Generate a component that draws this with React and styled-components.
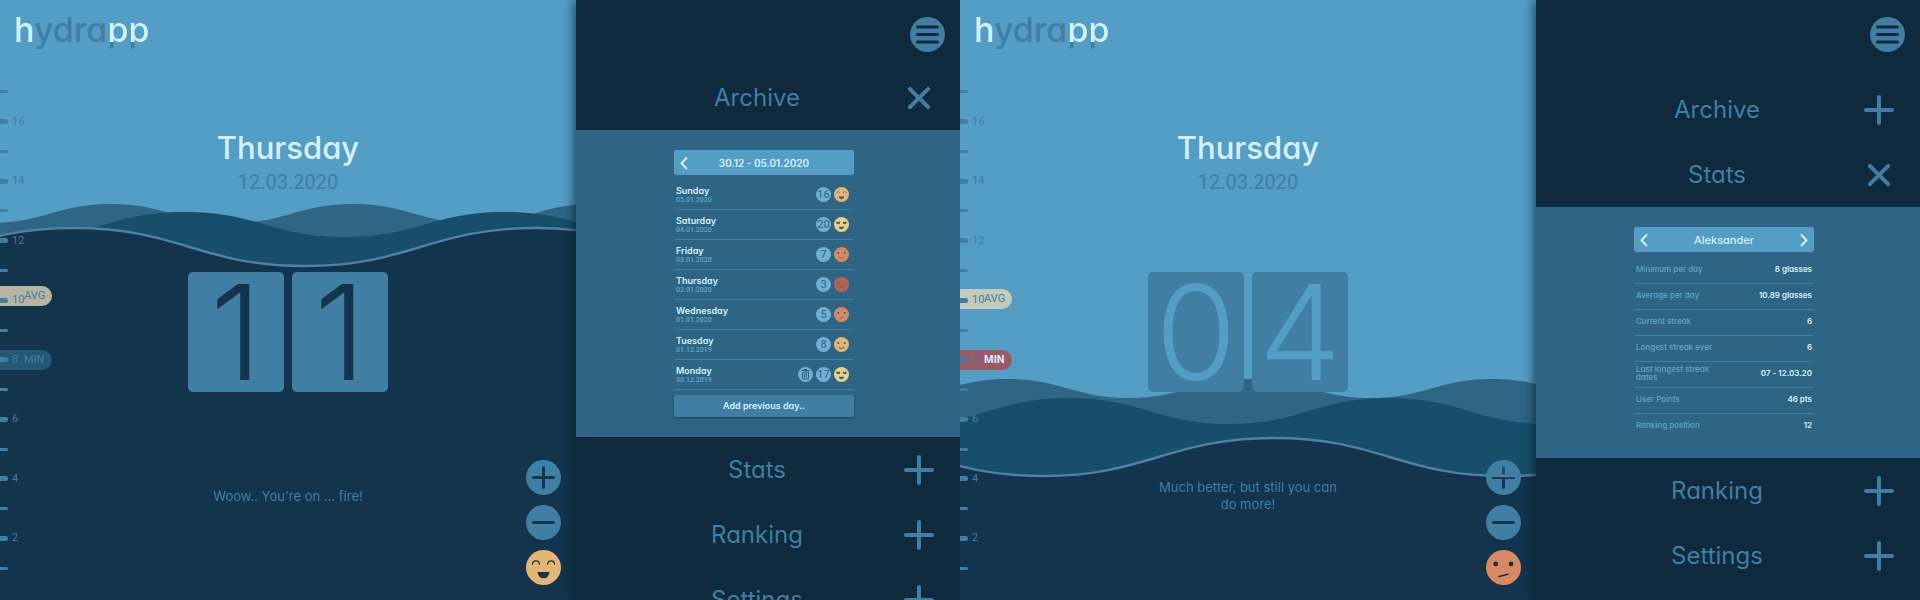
import React, { useId } from "react";
import styled, { createGlobalStyle, css } from "styled-components";

const color = {
  sky: "#549dc5",
  mid: "#407ea3",
  panel: "#2e6585",
  waveBack: "#2f6585",
  waveMiddle: "#174e6b",
  deep: "#12344d",
  night: "#0f2a3d",
  crest: "#4e81a4",
  pale: "#d4f1fd",
  chip: "#70b0d4",
  muted: "#5fa6cb",
  sand: "#e4b573",
  yellow: "#efce7e",
  orange: "#d98961",
  red: "#bc6252",
};

const textFont = `Inter, "Open Sans", sans-serif`;
const numberFont = `Roboto, Inter, sans-serif`;

const GlobalStyle = createGlobalStyle`
  *, *::before, *::after { box-sizing: border-box; }
  body {
    margin: 0;
    font-family: ${textFont};
    font-feature-settings: "cv11";
    background: ${color.night};
  }
  button { font: inherit; font-feature-settings: inherit; }
  h1, h2, p, ul { margin: 0; padding: 0; }
`;

const Page = styled.div`
  display: grid;
  grid-template-columns: 1fr 1fr;
`;

const Device = styled.section`
  display: grid;
  grid-template-columns: 3fr 2fr;
  height: 100vh;
  overflow: hidden;
`;

/* ---------- main screen ---------- */

const Screen = styled.main`
  position: relative;
  isolation: isolate;
  display: grid;
  grid-template-columns: 60px 1fr 60px;
  grid-template-rows: 77px 1fr;
  background: ${color.sky};
`;

const WaveLayer = styled.svg`
  position: absolute;
  inset: 0;
  z-index: -1;
  width: 100%;
  height: 100%;
`;

const Header = styled.header`
  grid-column: 1 / -1;
  padding: 10px 14px;
`;

const Logo = styled.h1`
  font-size: 34px;
  line-height: 40px;
  font-weight: 500;
  color: ${color.mid};
`;

const LogoLight = styled.span`
  color: ${color.pale};
`;

const LogoSplit = styled.span`
  color: transparent;
  background: linear-gradient(${color.pale} 80%, ${color.mid} 80%);
  background-clip: text;
  -webkit-background-clip: text;
`;

const Scale = styled.div`
  position: relative;
  display: flex;
  flex-direction: column;
  margin-bottom: 17px;
`;

const Tick = styled.div`
  position: relative;
  z-index: 1;
  flex: 1;
  display: flex;
  align-items: center;
  gap: 4px;
  font-family: ${numberFont};
  font-size: 11px;
  line-height: 12px;
  color: ${color.mid};

  &::before {
    content: "";
    width: 8px;
    height: ${(p) => (p.$major ? 5 : 3)}px;
    border-radius: 0 3px 3px 0;
    background: ${color.mid};
  }
`;

const markerTone = {
  average: css`
    background: #b9b4a0;
    color: ${color.mid};
  `,
  averageLight: css`
    background: #c5cab9;
    color: ${color.mid};
  `,
  reached: css`
    background: #265776;
    color: ${color.mid};
  `,
  missed: css`
    background: #9d5966;
    color: ${color.pale};
    font-weight: 700;
  `,
};

const Marker = styled.div`
  position: absolute;
  left: 0;
  top: ${(p) => ((17.5 - p.$level) / 17) * 100}%;
  transform: translateY(-50%);
  width: 52px;
  padding-left: 24px;
  border-radius: 0 10px 10px 0;
  font-family: ${numberFont};
  font-size: 11px;
  line-height: 20px;
  ${(p) => markerTone[p.$tone]}
`;

const Today = styled.div`
  display: flex;
  flex-direction: column;
  align-items: center;
  padding-top: 51px;
`;

const DayName = styled.h2`
  font-size: 31px;
  line-height: 40px;
  font-weight: 500;
  color: ${color.pale};
`;

const DayDate = styled.p`
  margin-top: 2px;
  font-family: ${numberFont};
  font-size: 20px;
  line-height: 24px;
  color: ${color.mid};
`;

const Counter = styled.div`
  display: flex;
  gap: 8px;
  margin-top: 78px;
`;

const Digit = styled.span`
  width: 96px;
  border-radius: 5px;
  background: ${color.mid};
  color: ${(p) => (p.$submerged ? color.deep : color.sky)};
  font-size: 132px;
  line-height: 120px;
  font-weight: 300;
  text-align: center;
`;

const Message = styled.p`
  flex: 1;
  display: flex;
  align-items: center;
  max-width: 192px;
  font-size: 13px;
  line-height: 17px;
  text-align: center;
  color: ${color.mid};
`;

const Actions = styled.div`
  display: flex;
  flex-direction: column;
  justify-content: flex-end;
  align-items: flex-end;
  gap: 10px;
  padding: 0 15px 15px 0;
`;

const RoundButton = styled.button`
  display: block;
  width: 35px;
  height: 35px;
  padding: 0;
  border: 0;
  border-radius: 50%;
  background: none;
  cursor: pointer;

  svg {
    display: block;
    width: 100%;
    height: 100%;
  }
`;

/* ---------- side menu ---------- */

const Sidebar = styled.aside`
  position: relative;
  z-index: 1;
  display: flex;
  flex-direction: column;
  min-height: 0;
  background: ${color.night};
  box-shadow: 0 0 12px rgba(8, 24, 38, 0.9);
`;

const MenuBar = styled.div`
  flex: none;
  display: flex;
  justify-content: flex-end;
  height: 65px;
  padding: 17px 15px 0 0;
`;

const Menu = styled.nav`
  flex: 1;
  display: flex;
  flex-direction: column;
  justify-content: safe center;
  min-height: 0;
  overflow: hidden;
`;

const MenuHeading = styled.h2`
  flex: none;
  font-size: 24px;
  font-weight: 400;
`;

const MenuButton = styled.button`
  display: flex;
  align-items: center;
  width: 100%;
  height: 65px;
  padding: 0 26px 0 34px;
  border: 0;
  background: none;
  color: ${color.mid};
  cursor: pointer;

  svg {
    flex: none;
    width: 30px;
    height: 30px;
    transform: rotate(${(p) => (p["aria-expanded"] ? 45 : 0)}deg);
  }
`;

const MenuLabel = styled.span`
  flex: 1;
  text-align: center;
`;

const Panel = styled.div`
  flex: none;
  padding: 20px 8px 20px 0;
  background: ${color.panel};
`;

const Card = styled.div`
  width: 180px;
  margin: 0 auto;
`;

const CardHeader = styled.div`
  display: grid;
  grid-template-columns: 20px 1fr 20px;
  align-items: center;
  height: 25px;
  margin-bottom: 5px;
  border-radius: 2px;
  background: ${color.sky};
  color: ${color.pale};
  font-size: ${(p) => p.$size}px;
  font-weight: ${(p) => (p.$size > 10 ? 500 : 600)};
  text-align: center;
`;

const ArrowButton = styled.button`
  display: flex;
  justify-content: center;
  padding: 0;
  border: 0;
  background: none;
  color: ${color.pale};
  cursor: pointer;
`;

const CardTitle = styled.span`
  grid-column: 2;
`;

const DayList = styled.ul`
  list-style: none;
`;

const DayRow = styled.li`
  display: flex;
  align-items: center;
  gap: 3px;
  height: 30px;
  padding: 0 5px 0 2px;
  border-bottom: 1px solid ${color.mid};
`;

const DayText = styled.div`
  flex: 1;
  font-size: 9px;
  line-height: 10px;
  font-weight: 600;
  color: ${color.pale};
`;

const SmallDate = styled.time`
  display: block;
  font-family: ${numberFont};
  font-size: 7px;
  line-height: 8px;
  font-weight: 500;
  color: ${color.muted};
`;

const Chip = styled.span`
  display: flex;
  align-items: center;
  justify-content: center;
  width: 15px;
  height: 15px;
  border-radius: 50%;
  background: ${color.chip};
  color: ${color.panel};
  font-family: ${numberFont};
  font-size: 11px;
  line-height: 15px;

  svg {
    display: block;
  }
`;

const ChipButton = styled(Chip).attrs({ as: "button", type: "button" })`
  padding: 0;
  border: 0;
  cursor: pointer;
`;

const AddButton = styled.button`
  display: block;
  width: 100%;
  height: 22px;
  margin-top: 5px;
  padding: 0;
  border: 0;
  border-radius: 2px;
  background: ${color.mid};
  box-shadow: 0 1px 2px rgba(10, 40, 60, 0.6);
  color: ${color.pale};
  font-size: 9px;
  line-height: 20px;
  font-weight: 600;
  cursor: pointer;
`;

const StatsTable = styled.table`
  width: 100%;
  border-collapse: collapse;

  tr + tr {
    border-top: 1px solid ${color.mid};
  }
  th,
  td {
    height: 26px;
    padding: 0 2px 2px;
    font-size: 8px;
    line-height: 8px;
  }
  tr:last-child > * {
    height: 25px;
  }
  th {
    width: 82px;
    text-align: left;
    font-weight: 500;
    color: ${color.muted};
  }
  td {
    text-align: right;
    font-weight: 600;
    color: ${color.pale};
  }
`;

/* ---------- drawings ---------- */

function wavePath({ crest, period, high, low }) {
  const half = period / 2;
  const bend = half * 0.45;
  const start = crest - period * 2;
  let x = start;
  let y = high;
  let d = `M${x} ${y}`;
  while (x < 640) {
    const nextY = y === high ? low : high;
    d += ` C${x + bend} ${y} ${x + half - bend} ${nextY} ${x + half} ${nextY}`;
    x += half;
    y = nextY;
  }
  return { d, start, end: x };
}

function Waves({ back, middle, front }) {
  const layers = [
    [back, color.waveBack],
    [middle, color.waveMiddle],
    [front, color.deep],
  ];
  return (
    <WaveLayer viewBox="0 0 576 600" preserveAspectRatio="none" aria-hidden="true">
      {layers.map(([wave, fill]) => {
        const { d, start, end } = wavePath(wave);
        return (
          <g key={fill}>
            <path d={`${d} L${end} 600 L${start} 600 Z`} fill={fill} />
            {wave === front && <path d={d} fill="none" stroke={color.crest} strokeWidth="2.4" />}
          </g>
        );
      })}
    </WaveLayer>
  );
}

function CutoutIcon({ bars }) {
  const id = useId();
  return (
    <svg viewBox="0 0 35 35" aria-hidden="true">
      <mask id={id}>
        <rect width="35" height="35" fill="#fff" />
        <path d={bars} stroke="#000" strokeWidth="3" strokeLinecap="round" />
      </mask>
      <circle cx="17.5" cy="17.5" r="17.5" fill={color.mid} mask={`url(#${id})`} />
    </svg>
  );
}

const faces = {
  laugh: {
    fill: color.sand,
    draw: (
      <>
        <path d="M6.5 14.2a3.4 3.4 0 0 1 6.8 0M21.7 14.2a3.4 3.4 0 0 1 6.8 0" fill="none" strokeWidth="1.2" />
        <path d="M11.5 22h12a6 6.3 0 0 1-12 0z" stroke="none" />
      </>
    ),
  },
  love: {
    fill: color.yellow,
    draw: (
      <>
        <path d="M5 12q2.4-2.5 4.8 0q2.4-2.5 4.8 0q-1 4-4.8 5q-4-1-4.8-5zM20.4 12q2.4-2.5 4.8 0q2.4-2.5 4.8 0q-1 4-4.8 5q-4-1-4.8-5z" stroke="none" />
        <path d="M11.5 23h12a6 5.5 0 0 1-12 0z" stroke="none" />
      </>
    ),
  },
  neutral: {
    fill: color.orange,
    draw: (
      <>
        <circle cx="9.7" cy="14" r="2.3" stroke="none" />
        <circle cx="25.3" cy="14" r="2.3" stroke="none" />
        <path d="M12.5 25.5h10" strokeWidth="3" opacity="0.5" />
      </>
    ),
  },
  sad: {
    fill: color.red,
    draw: (
      <>
        <path d="M6.5 14a3.4 3.4 0 0 0 6.8 0M21.7 14a3.4 3.4 0 0 0 6.8 0" fill="none" strokeWidth="1.5" />
        <path d="M12 27a5.5 5.5 0 0 1 11 0" fill="none" strokeWidth="2" />
      </>
    ),
  },
  confused: {
    fill: color.orange,
    draw: (
      <>
        <circle cx="9.7" cy="14" r="2.4" stroke="none" />
        <circle cx="25" cy="14" r="2.4" stroke="none" />
        <path d="M13 26.5l8.8-2.2" strokeWidth="1.6" />
      </>
    ),
  },
  smile: {
    fill: color.sand,
    draw: (
      <>
        <circle cx="9.7" cy="14" r="2.3" stroke="none" />
        <circle cx="25.3" cy="14" r="2.3" stroke="none" />
        <path d="M12.5 23a5 4.5 0 0 0 10 0" fill="none" strokeWidth="2" />
      </>
    ),
  },
};

function Face({ mood, size = 35, ink = color.deep }) {
  const { fill, draw } = faces[mood];
  return (
    <svg width={size} height={size} viewBox="0 0 35 35" role="img" aria-label={mood}>
      <circle cx="17.5" cy="17.5" r="17.5" fill={fill} />
      <g fill={ink} stroke={ink} strokeLinecap="round">
        {draw}
      </g>
    </svg>
  );
}

function PlusIcon() {
  return (
    <svg viewBox="0 0 30 30" aria-hidden="true">
      <path d="M15 2v26M2 15h26" stroke="currentColor" strokeWidth="4" strokeLinecap="round" />
    </svg>
  );
}

function Arrow({ direction }) {
  return (
    <svg width="10" height="14" viewBox="0 0 10 14" aria-hidden="true">
      <path
        d={direction === "left" ? "M8 1.5L2.5 7.3L8 13" : "M2 1.5L7.5 7.3L2 13"}
        fill="none"
        stroke="currentColor"
        strokeWidth="2"
      />
    </svg>
  );
}

function TrashIcon() {
  return (
    <svg width="9" height="11" viewBox="0 0 9 11" aria-hidden="true">
      <path d="M.5 1.5h8M3 .7h3" stroke={color.panel} strokeWidth="1.2" />
      <path d="M1.5 3h6v7h-6zM3.7 4v5M5.3 4v5" fill="none" stroke={color.panel} strokeWidth="1" />
    </svg>
  );
}

/* ---------- composed parts ---------- */

const LEVELS = Array.from({ length: 17 }, (_, i) => 17 - i);
const SECTIONS = ["Archive", "Stats", "Ranking", "Settings"];

const DAYS = [
  { name: "Sunday", date: "05.01.2020", count: 16, mood: "laugh" },
  { name: "Saturday", date: "04.01.2020", count: 20, mood: "love" },
  { name: "Friday", date: "03.01.2020", count: 7, mood: "neutral" },
  { name: "Thursday", date: "02.01.2020", count: 3, mood: "sad" },
  { name: "Wednesday", date: "01.01.2020", count: 5, mood: "confused" },
  { name: "Tuesday", date: "31.12.2019", count: 8, mood: "smile" },
  { name: "Monday", date: "30.12.2019", count: 17, mood: "love", removable: true },
];

const STATS = [
  ["Minimum per day", "8 glasses"],
  ["Average per day", "10.89 glasses"],
  ["Current streak", "6"],
  ["Longest streak ever", "6"],
  ["Last longest streak dates", "07 - 12.03.20"],
  ["User Points", "46 pts"],
  ["Ranking position", "12"],
];

function ArchiveCard() {
  return (
    <Card>
      <CardHeader $size={10}>
        <ArrowButton type="button" aria-label="Previous week">
          <Arrow direction="left" />
        </ArrowButton>
        <CardTitle>30.12 - 05.01.2020</CardTitle>
      </CardHeader>
      <DayList>
        {DAYS.map((day) => (
          <DayRow key={day.date}>
            <DayText>
              {day.name}
              <SmallDate>{day.date}</SmallDate>
            </DayText>
            {day.removable && (
              <ChipButton aria-label="Remove day">
                <TrashIcon />
              </ChipButton>
            )}
            <Chip>{day.count}</Chip>
            <Face mood={day.mood} size={15} ink={color.panel} />
          </DayRow>
        ))}
      </DayList>
      <AddButton type="button">Add previous day..</AddButton>
    </Card>
  );
}

function StatsCard() {
  return (
    <Card>
      <CardHeader $size={11}>
        <ArrowButton type="button" aria-label="Previous user">
          <Arrow direction="left" />
        </ArrowButton>
        <CardTitle>Aleksander</CardTitle>
        <ArrowButton type="button" aria-label="Next user">
          <Arrow direction="right" />
        </ArrowButton>
      </CardHeader>
      <StatsTable>
        <tbody>
          {STATS.map(([label, value]) => (
            <tr key={label}>
              <th scope="row">{label}</th>
              <td>{value}</td>
            </tr>
          ))}
        </tbody>
      </StatsTable>
    </Card>
  );
}

function HydrappView({ digits, submerged, message, mood, waves, average, averageTone, minimumTone, open, children }) {
  return (
    <Device>
      <Screen>
        <Waves {...waves} />
        <Header>
          <Logo>
            <LogoLight>h</LogoLight>ydra<LogoSplit>pp</LogoSplit>
          </Logo>
        </Header>
        <Scale>
          {LEVELS.map((level) => (
            <Tick key={level} $major={level % 2 === 0}>
              {level % 2 === 0 ? level : null}
            </Tick>
          ))}
          <Marker $level={average} $tone={averageTone}>AVG</Marker>
          <Marker $level={8} $tone={minimumTone}>MIN</Marker>
        </Scale>
        <Today>
          <DayName>Thursday</DayName>
          <DayDate>12.03.2020</DayDate>
          <Counter>
            {digits.map((digit, i) => (
              <Digit key={i} $submerged={submerged}>{digit}</Digit>
            ))}
          </Counter>
          <Message>{message}</Message>
        </Today>
        <Actions>
          <RoundButton type="button" aria-label="Add a glass">
            <CutoutIcon bars="M17.5 7.7v19.6M7.5 17.5h20" />
          </RoundButton>
          <RoundButton type="button" aria-label="Remove a glass">
            <CutoutIcon bars="M7.5 17.5h20" />
          </RoundButton>
          <RoundButton type="button" aria-label="Mood">
            <Face mood={mood} />
          </RoundButton>
        </Actions>
      </Screen>
      <Sidebar>
        <MenuBar>
          <RoundButton type="button" aria-label="Menu">
            <CutoutIcon bars="M7.5 10h20M7.5 17.5h20M7.5 25h20" />
          </RoundButton>
        </MenuBar>
        <Menu>
          {SECTIONS.map((name) => (
            <React.Fragment key={name}>
              <MenuHeading>
                <MenuButton type="button" aria-expanded={name === open}>
                  <MenuLabel>{name}</MenuLabel>
                  <PlusIcon />
                </MenuButton>
              </MenuHeading>
              {name === open && <Panel>{children}</Panel>}
            </React.Fragment>
          ))}
        </Menu>
      </Sidebar>
    </Device>
  );
}

const HIGH_WATER = {
  back: { crest: 111, period: 242, high: 204, low: 223 },
  middle: { crest: 185, period: 320, high: 212, low: 237 },
  front: { crest: 74, period: 462, high: 228, low: 266 },
};

const LOW_WATER = {
  back: { crest: 48, period: 242, high: 379, low: 398 },
  middle: { crest: 109, period: 320, high: 398, low: 424 },
  front: { crest: 314, period: 462, high: 438, low: 476 },
};

export default function App() {
  return (
    <>
      <GlobalStyle />
      <Page>
        <HydrappView
          digits={[1, 1]}
          submerged
          message="Woow.. You're on ... fire!"
          mood="laugh"
          waves={HIGH_WATER}
          average={10.15}
          averageTone="average"
          minimumTone="reached"
          open="Archive"
        >
          <ArchiveCard />
        </HydrappView>
        <HydrappView
          digits={[0, 4]}
          message="Much better, but still you can do more!"
          mood="confused"
          waves={LOW_WATER}
          average={10.05}
          averageTone="averageLight"
          minimumTone="missed"
          open="Stats"
        >
          <StatsCard />
        </HydrappView>
      </Page>
    </>
  );
}
